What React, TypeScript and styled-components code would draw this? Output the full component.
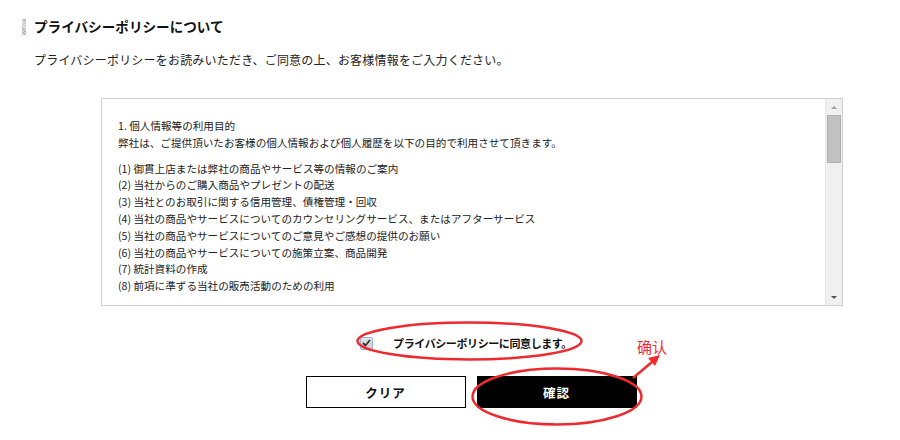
import React from 'react';
import styled, { createGlobalStyle } from 'styled-components';

const GlobalStyle = createGlobalStyle`
  html, body {
    margin: 0;
    padding: 0;
    background: #fff;
  }
  body {
    font-family: "Noto Sans CJK JP", "Liberation Sans", sans-serif;
    color: #222;
  }
`;

const purposes = [
  '(1) 御貫上店または弊社の商品やサービス等の情報のご案内',
  '(2) 当社からのご購入商品やプレゼントの配送',
  '(3) 当社とのお取引に関する信用管理、債権管理・回収',
  '(4) 当社の商品やサービスについてのカウンセリングサービス、またはアフターサービス',
  '(5) 当社の商品やサービスについてのご意見やご感想の提供のお願い',
  '(6) 当社の商品やサービスについての施策立案、商品開発',
  '(7) 統計資料の作成',
  '(8) 前項に準ずる当社の販売活動のための利用',
];

export default function App() {
  return (
    <>
      <GlobalStyle />
      <Page>
        <Heading>
          <HeadingMark />
          <HeadingText>プライバシーポリシーについて</HeadingText>
        </Heading>
        <Lead>プライバシーポリシーをお読みいただき、ご同意の上、お客様情報をご入力ください。</Lead>

        <Main>
          <PolicyBox>
            <PolicyText>
              <Paragraph>
                <Line>1. 個人情報等の利用目的</Line>
                <Line>弊社は、ご提供頂いたお客様の個人情報および個人履歴を以下の目的で利用させて頂きます。</Line>
              </Paragraph>
              <Paragraph>
                {purposes.map((p) => (
                  <Line key={p}>{p}</Line>
                ))}
              </Paragraph>
            </PolicyText>
            <Scrollbar>
              <ScrollArrow $dir="up" />
              <Track>
                <Thumb />
              </Track>
              <ScrollArrow $dir="down" />
            </Scrollbar>
          </PolicyBox>

          <AgreeRow>
            <CheckBox>
              <svg width="9" height="8" viewBox="0 0 9 8">
                <path d="M1 4 L3.5 6.5 L8 1" fill="none" stroke="#333" strokeWidth="1.8" />
              </svg>
            </CheckBox>
            <AgreeLabel>プライバシーポリシーに同意します。</AgreeLabel>
          </AgreeRow>

          <ButtonRow>
            <Button type="button">クリア</Button>
            <Button type="button" $primary>
              確認
            </Button>
          </ButtonRow>
        </Main>

        <Annotations width="900" height="440" viewBox="0 0 900 440">
          <ellipse cx="469.5" cy="341" rx="112" ry="18.5" fill="none" stroke="#ee2a2f" strokeWidth="2.5" />
          <ellipse cx="557" cy="396.5" rx="84.5" ry="28" fill="none" stroke="#ee2a2f" strokeWidth="2.5" />
          <line x1="633" y1="378" x2="652" y2="362" stroke="#ee2a2f" strokeWidth="2.5" />
          <polygon points="660,355 648,358 655,366" fill="#ee2a2f" />
        </Annotations>
        <Note>确认</Note>
      </Page>
    </>
  );
}

const Page = styled.div`
  position: relative;
  width: 900px;
  height: 440px;
  padding: 18px 0 0 22px;
  box-sizing: border-box;
  overflow: hidden;
`;

const Heading = styled.div`
  display: flex;
  align-items: center;
  gap: 8px;
  height: 17px;
`;

const HeadingMark = styled.span`
  width: 4px;
  height: 16px;
  background-image: repeating-linear-gradient(45deg, #b5b5b5 0 1px, #e8e8e8 1px 2px);
`;

const HeadingText = styled.h1`
  margin: 0;
  font-size: 13.6px;
  font-weight: 700;
  line-height: 17px;
  color: #111;
`;

const Lead = styled.p`
  margin: 16px 0 0 12px;
  font-size: 12px;
  letter-spacing: 0.2px;
  line-height: 18px;
  color: #222;
`;

const Main = styled.div`
  display: flex;
  flex-direction: column;
  align-items: center;
  width: 742px;
  margin: 29px 0 0 79px;
`;

const PolicyBox = styled.div`
  display: flex;
  width: 742px;
  height: 208px;
  box-sizing: border-box;
  border: 1px solid #cfcfcf;
  background: #fff;
`;

const PolicyText = styled.div`
  flex: 1;
  overflow: hidden;
  padding: 19px 16px 0;
  font-size: 10.6px;
  line-height: 16.8px;
  color: #222;
`;

const Paragraph = styled.div`
  margin-bottom: 9px;
`;

const Line = styled.div`
  white-space: nowrap;
`;

const Scrollbar = styled.div`
  display: flex;
  flex-direction: column;
  width: 16px;
  background: #f0f0f0;
  border-left: 1px solid #e6e6e6;
`;

const ScrollArrow = styled.div<{ $dir: 'up' | 'down' }>`
  height: 16px;
  display: flex;
  align-items: center;
  justify-content: center;
  &::before {
    content: '';
    border-left: 3.5px solid transparent;
    border-right: 3.5px solid transparent;
    ${(p) =>
      p.$dir === 'up'
        ? 'border-bottom: 3.5px solid #a3a3a3;'
        : 'border-top: 3.5px solid #505050;'}
  }
`;

const Track = styled.div`
  flex: 1;
  display: flex;
  flex-direction: column;
  padding: 0 1px;
`;

const Thumb = styled.div`
  height: 48px;
  background: #c1c1c1;
  border: 1px solid #b0b0b0;
  box-sizing: border-box;
`;

const AgreeRow = styled.label`
  display: flex;
  align-items: center;
  gap: 20px;
  margin-top: 30px;
  margin-left: -12px;
  height: 14px;
`;

const CheckBox = styled.span`
  width: 11px;
  height: 11px;
  display: flex;
  align-items: center;
  justify-content: center;
  background: linear-gradient(#e4e4e4, #cdcdcd);
  border: 1px solid #93b4dc;
  border-radius: 2px;
`;

const AgreeLabel = styled.span`
  font-size: 11px;
  font-weight: 700;
  letter-spacing: -0.4px;
  color: #111;
`;

const ButtonRow = styled.div`
  display: flex;
  gap: 11px;
  margin-top: 26px;
  margin-left: -2px;
`;

const Button = styled.button<{ $primary?: boolean }>`
  width: 160px;
  height: 32px;
  box-sizing: border-box;
  border: 1px solid #000;
  background: ${(p) => (p.$primary ? '#000' : '#fff')};
  color: ${(p) => (p.$primary ? '#fff' : '#111')};
  font-family: "Noto Sans CJK JP", "Liberation Sans", sans-serif;
  font-size: 12.5px;
  font-weight: 700;
  letter-spacing: 1px;
  padding: 0;
  cursor: pointer;
`;

const Annotations = styled.svg`
  position: absolute;
  left: 0;
  top: 0;
  pointer-events: none;
`;

const Note = styled.span`
  position: absolute;
  left: 637px;
  top: 338px;
  font-family: "Noto Sans CJK SC", sans-serif;
  font-size: 15px;
  line-height: 18px;
  color: #ee2a2f;
`;
